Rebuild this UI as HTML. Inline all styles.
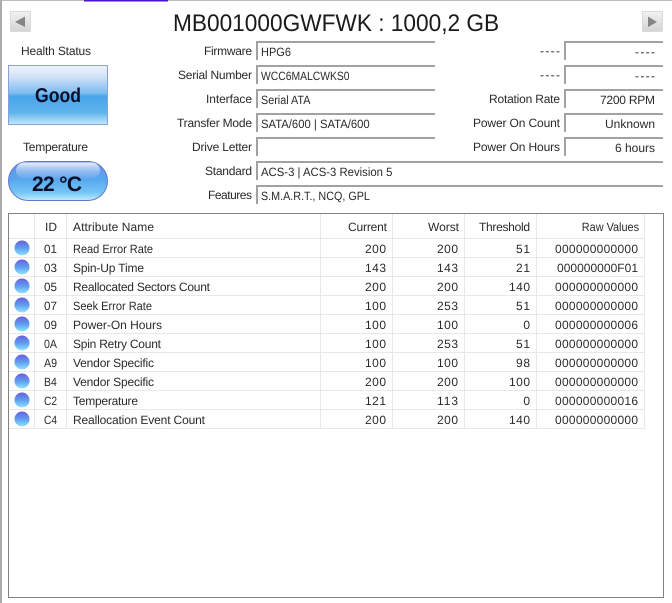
<!DOCTYPE html>
<html><head><meta charset="utf-8"><style>
html,body{margin:0;padding:0;background:#fff}
svg{display:block}
text{font-family:"Liberation Sans",sans-serif;font-size:12px;fill:#2a2a2a;text-rendering:geometricPrecision}
.e{text-anchor:end}
.m{text-anchor:middle}
</style></head><body>
<svg width="672" height="603" viewBox="0 0 672 603" xmlns="http://www.w3.org/2000/svg">
<defs>
<linearGradient id="good" x1="0" y1="0" x2="0" y2="1">
<stop offset="0" stop-color="#f0f4fd"/><stop offset=".2" stop-color="#cfe0f8"/><stop offset=".47" stop-color="#7cbcf0"/><stop offset=".52" stop-color="#48a4e9"/><stop offset=".8" stop-color="#5fb4ed"/><stop offset="1" stop-color="#c4eafc"/></linearGradient>
<linearGradient id="pill" x1="0" y1="0" x2="0" y2="1">
<stop offset="0" stop-color="#6c8fe4"/><stop offset=".45" stop-color="#56a6ee"/><stop offset=".8" stop-color="#74c6f4"/><stop offset="1" stop-color="#c4ecfc"/></linearGradient>
<linearGradient id="pillh" x1="0" y1="0" x2="0" y2="1">
<stop offset="0" stop-color="#f2f5fd" stop-opacity=".95"/><stop offset="1" stop-color="#7fb4ee" stop-opacity=".35"/></linearGradient>
<linearGradient id="dot" x1="0" y1="0" x2="0" y2="1">
<stop offset="0" stop-color="#6a5fe0"/><stop offset=".5" stop-color="#5f9cf0"/><stop offset="1" stop-color="#8fe6fb"/></linearGradient>
<linearGradient id="btn" x1="0" y1="0" x2="0" y2="1">
<stop offset="0" stop-color="#f2f2f2"/><stop offset="1" stop-color="#d4d4d4"/></linearGradient>
</defs>

<rect x="0" y="0" width="672" height="1" fill="#bdbdbd"/>
<rect x="84" y="0" width="84" height="1.5" fill="#4a14c8"/>
<rect x="0" y="0" width="2" height="603" fill="#ababab"/>

<!-- nav -->
<rect x="10.5" y="11.5" width="20" height="20" fill="url(#btn)" stroke="#dcdcdc"/>
<path d="M15 22 L25 16.5 L25 27 Z" fill="#858585"/>
<rect x="642.5" y="11.5" width="20" height="20" fill="url(#btn)" stroke="#dcdcdc"/>
<path d="M657 22 L648 16.5 L648 27 Z" fill="#858585"/>

<text transform="translate(173 31) scale(.944 1)" style="font-size:24px;fill:#1a1a1a">MB001000GWFWK : 1000,2 GB</text>

<!-- health -->
<text x="21" y="55" textLength="70">Health Status</text>
<rect x="8.5" y="65.5" width="99" height="59" fill="url(#good)" stroke="#8a9fd6"/>
<text class="m" transform="translate(58 102) scale(.88 1)" style="font-size:20px;font-weight:bold;fill:#0a0f28">Good</text>
<text x="23" y="151" textLength="65">Temperature</text>
<rect x="8.5" y="161.5" width="99" height="39" rx="19.5" fill="url(#pill)" stroke="#5f78c8"/>
<rect x="16" y="162.5" width="84" height="16" rx="8" fill="url(#pillh)"/>
<text x="57" y="191" class="m" textLength="50" style="font-size:21px;font-weight:bold;fill:#0a0f28">22 °C</text>

<!-- labels -->
<text x="252" y="55" class="e" textLength="48">Firmware</text>
<text x="252" y="79" class="e" textLength="74">Serial Number</text>
<text x="252" y="103" class="e" textLength="46">Interface</text>
<text x="252" y="127" class="e" textLength="75">Transfer Mode</text>
<text x="252" y="151" class="e" textLength="60">Drive Letter</text>
<text x="252" y="175" class="e" textLength="47">Standard</text>
<text x="252" y="199" class="e" textLength="44">Features</text>

<!-- field boxes -->
<g fill="#a2a2a2">
<rect x="256" y="41" width="179" height="2"/><rect x="256" y="41" width="2" height="19"/>
<rect x="256" y="65" width="179" height="2"/><rect x="256" y="65" width="2" height="19"/>
<rect x="256" y="89" width="179" height="2"/><rect x="256" y="89" width="2" height="19"/>
<rect x="256" y="113" width="179" height="2"/><rect x="256" y="113" width="2" height="19"/>
<rect x="256" y="137" width="179" height="2"/><rect x="256" y="137" width="2" height="19"/>
<rect x="256" y="161" width="407" height="2"/><rect x="256" y="161" width="2" height="19"/>
<rect x="256" y="185" width="407" height="2"/><rect x="256" y="185" width="2" height="19"/>
<rect x="564" y="41" width="99" height="2"/><rect x="564" y="41" width="2" height="19"/>
<rect x="564" y="65" width="99" height="2"/><rect x="564" y="65" width="2" height="19"/>
<rect x="564" y="89" width="99" height="2"/><rect x="564" y="89" width="2" height="19"/>
<rect x="564" y="113" width="99" height="2"/><rect x="564" y="113" width="2" height="19"/>
<rect x="564" y="137" width="99" height="2"/><rect x="564" y="137" width="2" height="19"/>
</g>
<text transform="translate(261 56) scale(.917 1)">HPG6</text>
<text transform="translate(261 80) scale(.862 1)">WCC6MALCWKS0</text>
<text transform="translate(261 104) scale(.9 1)">Serial ATA</text>
<text transform="translate(261 128) scale(.94 1)">SATA/600 | SATA/600</text>
<text transform="translate(261 176) scale(.944 1)">ACS-3 | ACS-3 Revision 5</text>
<text transform="translate(261 200) scale(.897 1)">S.M.A.R.T., NCQ, GPL</text>

<text x="560" y="55" class="e" textLength="20">----</text>
<text x="560" y="79" class="e" textLength="20">----</text>
<text x="560" y="103" class="e" textLength="71">Rotation Rate</text>
<text x="560" y="127" class="e" textLength="87">Power On Count</text>
<text x="560" y="151" class="e" textLength="87">Power On Hours</text>
<text x="655" y="56" class="e" textLength="20">----</text>
<text x="655" y="80" class="e" textLength="20">----</text>
<text x="655" y="104" class="e" textLength="55">7200 RPM</text>
<text x="655" y="128" class="e" textLength="50">Unknown</text>
<text x="655" y="152" class="e" textLength="40">6 hours</text>

<!-- table -->
<rect x="8.5" y="213.5" width="655" height="384" fill="#fff" stroke="#828282"/>
<g stroke="#e8e8e8" stroke-width="1">
<path d="M9 238.5H644M9 257.5H644M9 276.5H644M9 295.5H644M9 314.5H644M9 333.5H644M9 352.5H644M9 371.5H644M9 390.5H644M9 409.5H644M9 428.5H644"/>
<path d="M34.5 214V429M66.5 214V429M320.5 214V429M392.5 214V429M464.5 214V429M536.5 214V429M644.5 214V429"/>
</g>
<g fill="url(#dot)">
<circle cx="22" cy="248" r="7.5"/><circle cx="22" cy="267" r="7.5"/><circle cx="22" cy="286" r="7.5"/><circle cx="22" cy="305" r="7.5"/><circle cx="22" cy="324" r="7.5"/><circle cx="22" cy="343" r="7.5"/><circle cx="22" cy="362" r="7.5"/><circle cx="22" cy="381" r="7.5"/><circle cx="22" cy="400" r="7.5"/><circle cx="22" cy="419" r="7.5"/>
</g>

<text x="45" y="231" textLength="12">ID</text>
<text x="73" y="231" textLength="81">Attribute Name</text>
<text x="387" y="231" class="e" textLength="39">Current</text>
<text x="459" y="231" class="e" textLength="31">Worst</text>
<text x="530" y="231" class="e" textLength="51">Threshold</text>
<text class="e" transform="translate(639 231) scale(.906 1)">Raw Values</text>

<text transform="translate(44 253) scale(.97 1)">01</text><text transform="translate(73 253) scale(.916 1)">Read Error Rate</text><text x="386" y="253" class="e" textLength="21">200</text><text x="458" y="253" class="e" textLength="21">200</text><text x="530" y="253" class="e" textLength="14">51</text><text x="638" y="253" class="e" textLength="83">000000000000</text>
<text transform="translate(44 272) scale(.97 1)">03</text><text x="73" y="272" textLength="71">Spin-Up Time</text><text x="386" y="272" class="e" textLength="21">143</text><text x="458" y="272" class="e" textLength="21">143</text><text x="530" y="272" class="e" textLength="14">21</text><text x="638" y="272" class="e" textLength="81">000000000F01</text>
<text transform="translate(44 291) scale(.97 1)">05</text><text x="73" y="291" textLength="137">Reallocated Sectors Count</text><text x="386" y="291" class="e" textLength="21">200</text><text x="458" y="291" class="e" textLength="21">200</text><text x="530" y="291" class="e" textLength="21">140</text><text x="638" y="291" class="e" textLength="83">000000000000</text>
<text transform="translate(44 310) scale(.97 1)">07</text><text transform="translate(73 310) scale(.918 1)">Seek Error Rate</text><text x="386" y="310" class="e" textLength="21">100</text><text x="458" y="310" class="e" textLength="21">253</text><text x="530" y="310" class="e" textLength="14">51</text><text x="638" y="310" class="e" textLength="83">000000000000</text>
<text transform="translate(44 329) scale(.97 1)">09</text><text x="73" y="329" textLength="89">Power-On Hours</text><text x="386" y="329" class="e" textLength="21">100</text><text x="458" y="329" class="e" textLength="21">100</text><text x="530" y="329" class="e" textLength="7">0</text><text x="638" y="329" class="e" textLength="83">000000000006</text>
<text transform="translate(44 348) scale(.886 1)">0A</text><text x="73" y="348" textLength="88">Spin Retry Count</text><text x="386" y="348" class="e" textLength="21">100</text><text x="458" y="348" class="e" textLength="21">253</text><text x="530" y="348" class="e" textLength="14">51</text><text x="638" y="348" class="e" textLength="83">000000000000</text>
<text transform="translate(44 367) scale(.886 1)">A9</text><text x="73" y="367" textLength="81">Vendor Specific</text><text x="386" y="367" class="e" textLength="21">100</text><text x="458" y="367" class="e" textLength="21">100</text><text x="530" y="367" class="e" textLength="14">98</text><text x="638" y="367" class="e" textLength="83">000000000000</text>
<text transform="translate(44 386) scale(.87 1)">B4</text><text x="73" y="386" textLength="81">Vendor Specific</text><text x="386" y="386" class="e" textLength="21">200</text><text x="458" y="386" class="e" textLength="21">200</text><text x="530" y="386" class="e" textLength="21">100</text><text x="638" y="386" class="e" textLength="83">000000000000</text>
<text transform="translate(44 405) scale(.85 1)">C2</text><text x="73" y="405" textLength="65">Temperature</text><text x="386" y="405" class="e" textLength="21">121</text><text x="458" y="405" class="e" textLength="21">113</text><text x="530" y="405" class="e" textLength="7">0</text><text x="638" y="405" class="e" textLength="83">000000000016</text>
<text transform="translate(44 424) scale(.85 1)">C4</text><text x="73" y="424" textLength="132">Reallocation Event Count</text><text x="386" y="424" class="e" textLength="21">200</text><text x="458" y="424" class="e" textLength="21">200</text><text x="530" y="424" class="e" textLength="21">140</text><text x="638" y="424" class="e" textLength="83">000000000000</text>
</svg>
</body></html>
